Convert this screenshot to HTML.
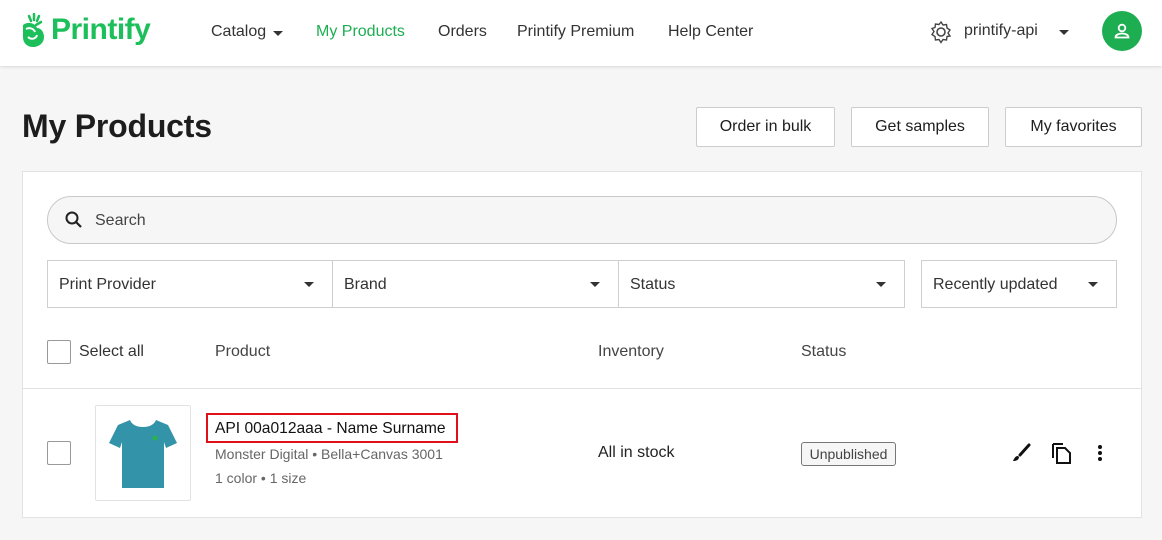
<!DOCTYPE html>
<html><head><style>
*{box-sizing:border-box;margin:0;padding:0}
body{width:1162px;height:540px;background:#f6f6f6;font-family:"Liberation Sans",Arial,sans-serif;color:#1d1d1d;position:relative;overflow:hidden}
.hdr{position:absolute;left:0;top:0;width:1162px;height:66px;background:#fff;box-shadow:0 1px 3px rgba(0,0,0,.12)}
.a{position:absolute;white-space:nowrap}
.nav{font-size:16px;top:23px;color:#333}
.btn{position:absolute;top:107px;height:40px;border:1px solid #ccc;background:#fff;border-radius:2px;font-size:16px;display:flex;align-items:center;justify-content:center;color:#1d1d1d}
.card{position:absolute;left:22px;top:171px;width:1120px;height:347px;background:#fff;border:1px solid #e2e2e2}
.sel{position:absolute;top:260px;height:48px;border:1px solid #cfcfcf;font-size:16px;padding:15px 11px;color:#333;background:#fff}
.car{position:absolute;right:18px;top:21px;border-left:5px solid transparent;border-right:5px solid transparent;border-top:5px solid #333}
.cb{position:absolute;width:24px;height:24px;border:1.5px solid #999;border-radius:2px;background:#fff}
</style></head><body>
<div class="hdr"></div>
<svg class="a" style="left:20px;top:13px" width="28" height="36" viewBox="0 0 28 36"><path d="M9 3l2 5M14 1v6M19 3l-2 5M21 9l-5 3" stroke="#1dbf5b" stroke-width="2.5" stroke-linecap="round"/><path d="M3 12c5-4 12-2 14 3 4 0 7 4 7 9 0 6-5 10-11 10S3 30 3 24z" fill="#1dbf5b"/><path d="M6 16c4-2 8 0 9 3M8 24c3 3 8 2 9-2" stroke="#fff" stroke-width="2" fill="none"/></svg>
<div class="a" style="left:51px;top:13px;font-size:30px;font-weight:bold;color:#1dbf5b;letter-spacing:-0.5px">Printify</div>
<div class="a nav" style="left:211px">Catalog</div>
<div class="a" style="left:273px;top:31px;border-left:5px solid transparent;border-right:5px solid transparent;border-top:5px solid #333"></div>
<div class="a nav" style="left:316px;color:#1dae52">My Products</div>
<div class="a nav" style="left:438px">Orders</div>
<div class="a nav" style="left:517px">Printify Premium</div>
<div class="a nav" style="left:668px">Help Center</div>
<svg class="a" style="left:929px;top:20px" width="24" height="24" viewBox="0 0 24 24"><circle cx="12" cy="12" r="4" fill="none" stroke="#444" stroke-width="1.6"/><path d="M12 2l2 3 3.5-.5.5 3.5 3 2-2 3 2 3-3 .5-.5 3.5-3.5-.5-2 3-2-3-3.5.5-.5-3.5-3-2 2-3-2-3 3-1 .5-3.5 3.5.5z" fill="none" stroke="#444" stroke-width="1.4"/></svg>
<div class="a nav" style="left:964px;top:22px">printify-api</div>
<div class="a" style="left:1059px;top:30px;border-left:5px solid transparent;border-right:5px solid transparent;border-top:5px solid #333"></div>
<div class="a" style="left:1102px;top:11px;width:40px;height:40px;border-radius:50%;background:#1dae52"></div>
<svg class="a" style="left:1112px;top:21px" width="20" height="20" viewBox="0 0 20 20"><circle cx="10" cy="7" r="3.3" fill="none" stroke="#fff" stroke-width="1.8"/><path d="M3.5 16.5c0-3 4-4 6.5-4s6.5 1 6.5 4z" fill="none" stroke="#fff" stroke-width="1.8"/></svg>
<div class="a" style="left:22px;top:108px;font-size:32px;font-weight:bold;color:#1d1d1d;letter-spacing:-0.2px">My Products</div>
<div class="btn" style="left:696px;width:139px">Order in bulk</div>
<div class="btn" style="left:851px;width:138px">Get samples</div>
<div class="btn" style="left:1005px;width:137px">My favorites</div>
<div class="card"></div>
<div class="a" style="left:47px;top:196px;width:1070px;height:48px;border:1px solid #c8c8c8;border-radius:24px;background:#f6f6f6"></div>
<svg class="a" style="left:64px;top:210px" width="20" height="20" viewBox="0 0 20 20"><circle cx="8" cy="8" r="5.5" fill="none" stroke="#222" stroke-width="2"/><path d="M12 12l5 5" stroke="#222" stroke-width="2.2"/></svg>
<div class="a" style="left:95px;top:212px;font-size:16px;color:#444">Search</div>
<div class="sel" style="left:47px;width:286px">Print Provider<div class="car"></div></div>
<div class="sel" style="left:332px;width:287px">Brand<div class="car"></div></div>
<div class="sel" style="left:618px;width:287px">Status<div class="car"></div></div>
<div class="sel" style="left:921px;width:196px">Recently updated<div class="car"></div></div>
<div class="cb" style="left:47px;top:340px"></div>
<div class="a" style="left:79px;top:343px;font-size:16px;color:#333">Select all</div>
<div class="a" style="left:215px;top:343px;font-size:16px;color:#444">Product</div>
<div class="a" style="left:598px;top:343px;font-size:16px;color:#444">Inventory</div>
<div class="a" style="left:801px;top:343px;font-size:16px;color:#444">Status</div>
<div class="a" style="left:23px;top:388px;width:1118px;height:1px;background:#e2e2e2"></div>
<div class="cb" style="left:47px;top:441px"></div>
<div class="a" style="left:95px;top:405px;width:96px;height:96px;border:1px solid #e2e2e2;border-radius:2px"></div>
<svg class="a" style="left:104px;top:414px" width="78" height="78" viewBox="0 0 78 78"><path d="M26 6l-12 5-9 18 11 5 2-6v46h42V28l2 6 11-5-9-18-12-5c-2 5-7 7-13 7s-11-2-13-7z" fill="#3393a9"/><circle cx="51" cy="24" r="2.5" fill="#2ab24a"/></svg>
<div class="a" style="left:206px;top:413px;width:252px;height:30px;border:2px solid #e0101a"></div>
<div class="a" style="left:215px;top:420px;font-size:15.6px;color:#111">API 00a012aaa - Name Surname</div>
<div class="a" style="left:215px;top:446px;font-size:14px;color:#666">Monster Digital • Bella+Canvas 3001</div>
<div class="a" style="left:215px;top:470px;font-size:14px;color:#666">1 color • 1 size</div>
<div class="a" style="left:598px;top:444px;font-size:16px;color:#222">All in stock</div>
<div class="a" style="left:801px;top:442px;width:95px;height:24px;border:1px solid #777;border-radius:3px;background:#f6f6f6;font-size:14px;color:#444;text-align:center;line-height:22px">Unpublished</div>
<svg class="a" style="left:1010px;top:442px" width="22" height="22" viewBox="0 0 22 22"><path d="M19 3l-9 10" stroke="#111" stroke-width="3" stroke-linecap="round"/><path d="M8 14c-3 0-4 3-5 5 3 0 6-1 6-4z" fill="#111"/></svg>
<svg class="a" style="left:1049px;top:441px" width="24" height="24" viewBox="0 0 24 24"><path d="M4 3h10M4 3v14" stroke="#111" stroke-width="2" fill="none"/><path d="M8 7h8l5 5v10H8z" stroke="#111" stroke-width="2" fill="none"/></svg>
<div class="a" style="left:1098px;top:445px;width:4px;height:4px;border-radius:50%;background:#111;box-shadow:0 6px 0 #111,0 12px 0 #111"></div>
</body></html>
